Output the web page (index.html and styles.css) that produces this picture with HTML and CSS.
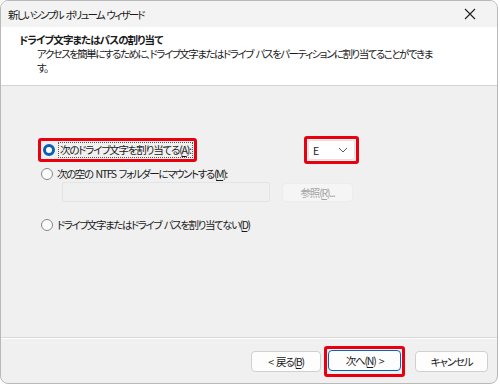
FILE: index.html
```html
<!DOCTYPE html>
<html lang="ja">

<head>
    <meta charset="UTF-8">
    <title>新しいシンプル ボリューム ウィザード</title>
    <link rel="stylesheet" href="styles.css">
</head>

<body>
    <div class="window">
        <div class="titlebar">
            <span class="title">新しいシンプル ボリューム ウィザード</span>
            <svg class="close" width="12" height="12" viewBox="0 0 12 12">
                <path d="M1 1L11 11M11 1L1 11" stroke="#1f1f1f" stroke-width="1.1" fill="none" />
            </svg>
        </div>

        <div class="header">
            <h1>ドライブ文字またはパスの割り当て</h1>
            <p>アクセスを簡単にするために、ドライブ文字またはドライブ パスをパーティションに割り当てることができま<br>す。</p>
        </div>

        <div class="body">
            <div class="row row-first">
                <div class="hl hl-option">
                    <span class="radio checked"></span>
                    <span class="label focus">次のドライブ文字を割り当てる(<u>A</u>):</span>
                </div>
                <div class="hl hl-combo">
                    <div class="combo">
                        <span>E</span>
                        <svg width="10" height="6" viewBox="0 0 10 6">
                            <path d="M1 1L5 5L9 1" stroke="#5c5c5c" stroke-width="1" fill="none" />
                        </svg>
                    </div>
                </div>
            </div>

            <div class="row row-second">
                <span class="radio"></span>
                <span class="label mount">次の空の NTFS フォルダーにマウントする(<u>M</u>):</span>
            </div>

            <div class="row row-path">
                <div class="field"></div>
                <div class="btn disabled">参照(<u>R</u>)...</div>
            </div>

            <div class="row row-third">
                <span class="radio"></span>
                <span class="label none">ドライブ文字またはドライブ パスを割り当てない(<u>D</u>)</span>
            </div>
        </div>

        <div class="footer">
            <div class="btn">&lt; 戻る(<u>B</u>)</div>
            <div class="hl hl-next">
                <div class="btn primary">次へ(<u>N</u>) &gt;</div>
            </div>
            <div class="btn cancel">キャンセル</div>
        </div>
    </div>
</body>

</html>
```

FILE: styles.css
```css
* {
    margin: 0;
    padding: 0;
    box-sizing: border-box;
}

body {
    font-family: "Noto Sans CJK JP", "Noto Sans", sans-serif;
    font-size: 10.5px;
    font-feature-settings: "palt" 1;
    letter-spacing: -1.2px;
    word-spacing: 2px;
    color: #1a1a1a;
    background: #ffffff;
}

u {
    text-underline-offset: 2px;
}

.window {
    width: 498px;
    height: 384px;
    border: 1px solid #b9b9b9;
    border-radius: 8px;
    overflow: hidden;
    display: flex;
    flex-direction: column;
    background: #f0f0f0;
}

.titlebar {
    height: 26px;
    background: #f3f3f3;
    display: flex;
    align-items: center;
    justify-content: space-between;
    padding: 0 21px 0 7px;
    flex-shrink: 0;
}

.title {
    letter-spacing: -1.8px;
    white-space: nowrap;
}

.header {
    height: 59px;
    background: #ffffff;
    border-bottom: 1px solid #d4d4d4;
    padding: 5px 0 0 18px;
    flex-shrink: 0;
}

.header h1 {
    font-size: 10.5px;
    font-weight: bold;
    letter-spacing: -0.9px;
    line-height: 15px;
}

.header p {
    padding-left: 18px;
    line-height: 14px;
    letter-spacing: -1.5px;
    white-space: nowrap;
}

.body {
    flex: 1;
    border-bottom: 1px solid #d9d9d9;
    box-shadow: 0 1px 0 #ffffff;
    padding: 50px 0 0 37px;
}

.row {
    display: flex;
    align-items: center;
}

.row-first {
    height: 28px;
}

.hl {
    border: 3px solid #e8000f;
    border-radius: 3px;
}

.hl-option {
    display: flex;
    align-items: center;
    width: 159px;
    height: 24px;
    padding: 0 2px 0 2px;
}

.hl-combo {
    margin-left: 107px;
    height: 28px;
    width: 55px;
    padding: 1px;
}

.combo {
    height: 20px;
    background: #ffffff;
    border: 1px solid #e1e1e1;
    border-radius: 3px;
    display: flex;
    align-items: center;
    justify-content: space-between;
    padding: 0 6px 0 4px;
}

.radio {
    width: 12px;
    height: 12px;
    border-radius: 50%;
    border: 1px solid #888888;
    background: #fbfbfb;
    flex-shrink: 0;
}

.radio.checked {
    border: 3px solid #0a5fb4;
    background: #ffffff;
}

.label {
    margin-left: 4px;
    line-height: 14px;
    white-space: nowrap;
}

.label.mount {
    letter-spacing: -1.4px;
}

.label.none {
    letter-spacing: -1.45px;
}

.label.focus {
    outline: 1px dotted #555555;
    outline-offset: 0;
    padding: 0 1px;
}

.row-second {
    margin-top: 2px;
    padding-left: 3px;
    height: 16px;
}

.row-path {
    margin-top: 0;
    padding-left: 24px;
    height: 20px;
}

.field {
    width: 208px;
    height: 20px;
    border: 1px solid #e4e4e4;
    border-radius: 2px;
}

.btn {
    width: 70px;
    height: 21px;
    border: 1px solid #d0d0d0;
    border-radius: 4px;
    background: #fdfdfd;
    display: flex;
    align-items: center;
    justify-content: center;
    white-space: nowrap;
}

.btn.disabled {
    margin-left: 12px;
    width: 71px;
    height: 19px;
    color: #a3a3a3;
    background: #f5f5f5;
    border-color: #ececec;
}

.row-third {
    margin-top: 15px;
    padding-left: 3px;
    height: 16px;
}

.footer {
    height: 45px;
    display: flex;
    align-items: center;
    justify-content: flex-end;
    padding: 2px 9px 0 0;
    flex-shrink: 0;
}

.hl-next {
    margin-left: 3px;
    padding: 1px;
    height: 31px;
}

.btn.primary {
    width: 73px;
    border: 1px solid #0067c0;
}

.btn.cancel {
    margin-left: 10px;
    width: 73px;
}
```
